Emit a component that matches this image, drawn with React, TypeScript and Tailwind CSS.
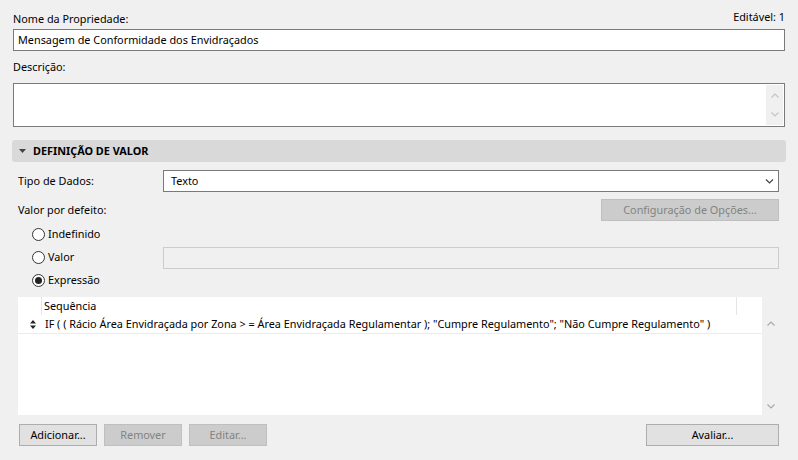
import type { ReactNode } from "react";

function Chevron({ dir, color, w = 8 }: { dir: "up" | "down"; color: string; w?: number }) {
  return (
    <svg width={w} height={5} viewBox="0 0 8 5" className="block">
      <polyline
        points={dir === "up" ? "0.5,4.5 4,1 7.5,4.5" : "0.5,0.5 4,4 7.5,0.5"}
        fill="none"
        stroke={color}
        strokeWidth={1.2}
      />
    </svg>
  );
}

function Radio({ checked, children }: { checked?: boolean; children: ReactNode }) {
  return (
    <div className="flex h-[23px] items-center">
      <span className="ml-[14px] flex h-[13px] w-[13px] items-center justify-center rounded-full border border-[#333] bg-white">
        {checked && <span className="h-[7px] w-[7px] rounded-full bg-[#222]" />}
      </span>
      <span className="ml-[3px]">{children}</span>
    </div>
  );
}

function Btn({ children, disabled, className = "" }: { children: ReactNode; disabled?: boolean; className?: string }) {
  return (
    <div
      className={
        "flex h-[22px] items-center justify-center border " +
        (disabled
          ? "border-[#bfbfbf] bg-[#cccccc] text-[#838383] "
          : "border-[#adadad] bg-[#e1e1e1] text-black ") +
        className
      }
    >
      {children}
    </div>
  );
}

export default function App() {
  return (
    <div className="h-[460px] w-[798px] overflow-hidden bg-[#f0f0f0] font-['Segoe_UI','Noto_Sans',sans-serif] text-[10.85px] text-black">
      <div className="px-[13px] pt-[8px]">
        <div className="flex h-[21px] items-start justify-between">
          <span className="mt-[3px]">Nome da Propriedade:</span>
          <span className="mt-[1px]">Editável: 1</span>
        </div>
        <div className="flex h-[22px] items-center border border-[#7a7a7a] bg-white px-[4px]">
          Mensagem de Conformidade dos Envidraçados
        </div>
        <div className="flex h-[32px] items-center">Descrição:</div>
        <div className="flex h-[44px] border border-[#7a7a7a] bg-white">
          <div className="flex-1" />
          <div className="my-[1px] mr-[1px] flex w-[17px] flex-col items-center justify-between bg-[#f0f0f0] py-[8px]">
            <Chevron dir="up" color="#c4c4c4" />
            <Chevron dir="down" color="#c4c4c4" />
          </div>
        </div>
      </div>

      <div className="mx-[12px] mt-[13px] flex h-[22px] items-center rounded-[3px] bg-[#d9d9d9] pl-[7px] font-bold">
        <svg width={7} height={4} viewBox="0 0 7 4" className="block">
          <polygon points="0,0 7,0 3.5,4" fill="#444" />
        </svg>
        <span className="ml-[7px]">DEFINIÇÃO DE VALOR</span>
      </div>

      <div className="pl-[18px] pr-[19px]">
        <div className="mt-[8px] flex h-[22px] items-center">
          <span className="w-[145px]">Tipo de Dados:</span>
          <div className="flex h-[22px] flex-1 items-center justify-between border border-[#7a7a7a] bg-white pl-[7px] pr-[4px]">
            <span>Texto</span>
            <Chevron dir="down" color="#444" w={9} />
          </div>
        </div>
        <div className="mt-[7px] flex h-[22px] items-center justify-between">
          <span className="mt-[1px]">Valor por defeito:</span>
          <Btn disabled className="w-[178px]">
            Configuração de Opções...
          </Btn>
        </div>
        <div className="mt-[2px]">
          <Radio>Indefinido</Radio>
          <div className="flex items-center">
            <div className="w-[145px]">
              <Radio>Valor</Radio>
            </div>
            <div className="h-[22px] flex-1 border border-[#cccccc] bg-[#f0f0f0]" />
          </div>
          <Radio checked>Expressão</Radio>
        </div>

        <div className="mt-[5px]">
          <div className="flex h-[18px] w-[744px] bg-white">
            <div className="w-[24px] border-r border-[#e5e5e5]" />
            <div className="flex w-[695px] items-center border-r border-[#e5e5e5] pl-[2px]">Sequência</div>
          </div>
          <div className="flex h-[100px]">
            <div className="w-[745px] bg-white">
              <div className="flex h-[19px] items-center border-b border-[#ebebeb]">
                <div className="flex w-[27px] justify-center pl-[2px]">
                  <svg width={6} height={9} viewBox="0 0 6 9" className="block">
                    <polygon points="0,3.5 6,3.5 3,0" fill="#222" />
                    <polygon points="0,5.5 6,5.5 3,9" fill="#222" />
                  </svg>
                </div>
                <span className="whitespace-pre">
                  IF ( ( Rácio Área Envidraçada por Zona &gt; = Área Envidraçada Regulamentar ); "Cumpre Regulamento"; "Não Cumpre Regulamento" )
                </span>
              </div>
            </div>
            <div className="flex w-[17px] flex-col items-center justify-between py-[6px]">
              <Chevron dir="up" color="#a9a9a9" />
              <Chevron dir="down" color="#a9a9a9" />
            </div>
          </div>
        </div>

        <div className="mt-[9px] flex items-center">
          <Btn className="ml-[1px] w-[78px]">Adicionar...</Btn>
          <Btn disabled className="ml-[7px] w-[78px]">
            Remover
          </Btn>
          <Btn disabled className="ml-[7px] w-[78px]">
            Editar...
          </Btn>
          <Btn className="ml-auto w-[133px]">Avaliar...</Btn>
        </div>
      </div>
    </div>
  );
}
